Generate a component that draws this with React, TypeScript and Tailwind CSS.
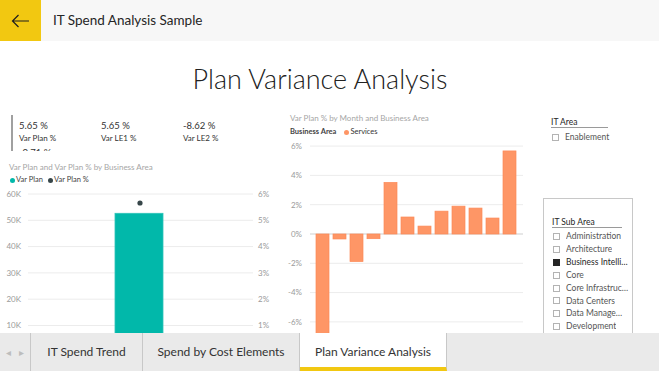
import React from "react";

const kpis = [
  { value: "5.65 %", label: "Var Plan %" },
  { value: "5.65 %", label: "Var LE1 %" },
  { value: "-8.62 %", label: "Var LE2 %" },
  { value: "-0.71 %", label: "Var LE3 %" },
];

const monthly = [-6.8, -0.34, -1.88, -0.32, 3.52, 1.16, 0.54, 1.56, 1.9, 1.77, 1.09, 5.67];

const subAreas = [
  { name: "Administration", checked: false },
  { name: "Architecture", checked: false },
  { name: "Business Intelligence", checked: true },
  { name: "Core", checked: false },
  { name: "Core Infrastructure", checked: false },
  { name: "Data Centers", checked: false },
  { name: "Data Management", checked: false },
  { name: "Development", checked: false },
];

const tabs = ["IT Spend Trend", "Spend by Cost Elements", "Plan Variance Analysis"];

function Checkbox({ checked }: { checked?: boolean }) {
  return (
    <span
      className={
        checked
          ? "w-[7px] h-[7px] shrink-0 bg-[#252525] border border-[#252525]"
          : "w-[7px] h-[7px] shrink-0 border border-[#b3b3b3] bg-white"
      }
    />
  );
}

function VarPlanChart() {
  const ticks = [
    { l: "60K", r: "6%" },
    { l: "50K", r: "5%" },
    { l: "40K", r: "4%" },
    { l: "30K", r: "3%" },
    { l: "20K", r: "2%" },
    { l: "10K", r: "1%" },
  ];
  return (
    <svg width="280" height="148" className="block">
      {ticks.map((t, i) => {
        const y = 9 + i * 26.3;
        return (
          <g key={t.l}>
            <line x1="28" x2="253" y1={y} y2={y} stroke="#ececec" strokeWidth="1" />
            <text x="21" y={y + 2.8} textAnchor="end" fontSize="8" fill="#9a9a9a">
              {t.l}
            </text>
            <text x="258" y={y + 2.8} fontSize="8" fill="#9a9a9a">
              {t.r}
            </text>
          </g>
        );
      })}
      <rect x="115" y="28.3" width="48" height="130" fill="#01b8aa" stroke="#2ec4b8" strokeWidth="0.8" />
      <circle cx="140" cy="18" r="2.6" fill="#374649" />
    </svg>
  );
}

function MonthlyChart() {
  const zero = 97;
  const scale = 14.65;
  const ticks = [6, 4, 2, 0, -2, -4, -6];
  return (
    <svg width="260" height="196" className="block">
      {ticks.map((t) => {
        const y = zero - t * scale;
        return (
          <g key={t}>
            <line
              x1="30"
              x2="243"
              y1={y}
              y2={y}
              stroke={t === 0 ? "#cfcfcf" : "#ececec"}
              strokeWidth="1"
            />
            <text x="22" y={y + 2.8} textAnchor="end" fontSize="8" fill="#9a9a9a">
              {t}%
            </text>
          </g>
        );
      })}
      {monthly.map((v, i) => {
        const h = Math.abs(v) * scale;
        const y = v >= 0 ? zero - h : zero;
        return (
          <rect
            key={i}
            x={36 + i * 17}
            y={y}
            width="13"
            height={h}
            fill="#fe9666"
            stroke="#fd8a58"
            strokeWidth="0.7"
          />
        );
      })}
    </svg>
  );
}

export default function App() {
  return (
    <div className="w-[659px] h-[371px] flex flex-col overflow-hidden bg-white font-['Lato',sans-serif] text-[#252525]">
      <header className="h-[41px] shrink-0 flex items-center bg-[#f7f7f7]">
        <div className="w-[41px] h-[41px] bg-[#f2c811] flex items-center justify-center">
          <svg width="19" height="14" viewBox="0 0 19 14" fill="none" stroke="#1f1f1f" strokeWidth="1.2">
            <path d="M18 7H1.5M7.5 1L1.5 7l6 6" />
          </svg>
        </div>
        <span className="ml-[12px] text-[13.5px] leading-none">IT Spend Analysis Sample</span>
      </header>

      <main className="flex-1 overflow-hidden">
        <h1 className="mt-[20px] h-[36px] leading-[36px] text-center text-[27px] font-light text-[#222] pr-[19px]">
          Plan Variance Analysis
        </h1>

        <div className="mt-[11px] flex">
          <section className="w-[280px] shrink-0">
            <div className="ml-[11px] mt-[7px] h-[36px] overflow-hidden border-l-2 border-[#a0a0a0] pl-[6px] pt-[5px]">
              <div className="grid grid-cols-[82px_82px_82px] gap-y-[3px]">
                {kpis.map((k, i) => (
                  <div key={i}>
                    <div className="text-[9.5px] leading-[12px] text-[#333]">{k.value}</div>
                    <div className="text-[8px] leading-[12px] text-[#333]">{k.label}</div>
                  </div>
                ))}
              </div>
            </div>
            <div className="mt-[11px] ml-[9px] h-[10px] leading-[10px] text-[8px] text-[#a6a6a6]">
              Var Plan and Var Plan % by Business Area
            </div>
            <div className="mt-[3px] ml-[10px] h-[10px] flex items-center text-[7.5px] text-[#444]">
              <span className="w-[5px] h-[5px] rounded-full bg-[#01b8aa]" />
              <span className="ml-[1px]">Var Plan</span>
              <span className="ml-[5px] w-[5px] h-[5px] rounded-full bg-[#374649]" />
              <span className="ml-[1px]">Var Plan %</span>
            </div>
            <VarPlanChart />
          </section>

          <section className="w-[260px] shrink-0">
            <div className="mt-[5px] ml-[10px] h-[10px] leading-[10px] text-[8px] text-[#a6a6a6]">
              Var Plan % by Month and Business Area
            </div>
            <div className="mt-[4px] ml-[10px] h-[10px] flex items-center text-[7.5px] text-[#333]">
              <span className="font-bold text-[#444]">Business Area</span>
              <span className="ml-[8px] w-[5px] h-[5px] rounded-full bg-[#fe9666]" />
              <span className="ml-[1px]">Services</span>
            </div>
            <MonthlyChart />
          </section>

          <aside className="flex-1">
            <div className="ml-[11px] w-[57px] mt-[9px] h-[11px] leading-[10px] text-[8.5px] text-[#252525] border-b border-[#9a9a9a]">
              IT Area
            </div>
            <div className="ml-[12px] mt-[3px] h-[13px] flex items-center gap-[6px] text-[8.5px] text-[#555]">
              <Checkbox />
              <span>Enablement</span>
            </div>
            <div className="ml-[3px] mt-[54px] w-[90px] h-[150px] border border-[#c8c8c8] pl-[8px] pr-[3px] pt-[18px]">
              <div className="w-[70px] h-[11px] leading-[10px] text-[8.5px] text-[#252525] border-b border-[#9a9a9a]">
                IT Sub Area
              </div>
              <div className="mt-[2px]">
                {subAreas.map((a) => (
                  <div key={a.name} className="h-[12.9px] flex items-center gap-[6px] pl-[1px] text-[8.5px] text-[#555]">
                    <Checkbox checked={a.checked} />
                    <span className={a.checked ? "truncate text-[#252525]" : "truncate"}>{a.name}</span>
                  </div>
                ))}
              </div>
            </div>
          </aside>
        </div>
      </main>

      <nav className="h-[38px] shrink-0 flex bg-[#eaeaea] text-[12px] text-[#333]">
        <div className="w-[31px] flex items-center justify-center gap-[8px] border-r border-[#c8c8c8] text-[#bdbdbd] text-[10px]">
          <span>◂</span>
          <span>▸</span>
        </div>
        {tabs.map((t, i) => {
          const active = i === tabs.length - 1;
          return (
            <div
              key={t}
              className={
                active
                  ? "w-[147px] flex items-center justify-center bg-white border-r border-[#c8c8c8] border-b-4 border-b-[#f2c811] pt-[4px]"
                  : i === 0
                  ? "w-[112px] flex items-center justify-center border-r border-[#c8c8c8]"
                  : "w-[157px] flex items-center justify-center border-r border-[#c8c8c8]"
              }
            >
              {t}
            </div>
          );
        })}
      </nav>
    </div>
  );
}
